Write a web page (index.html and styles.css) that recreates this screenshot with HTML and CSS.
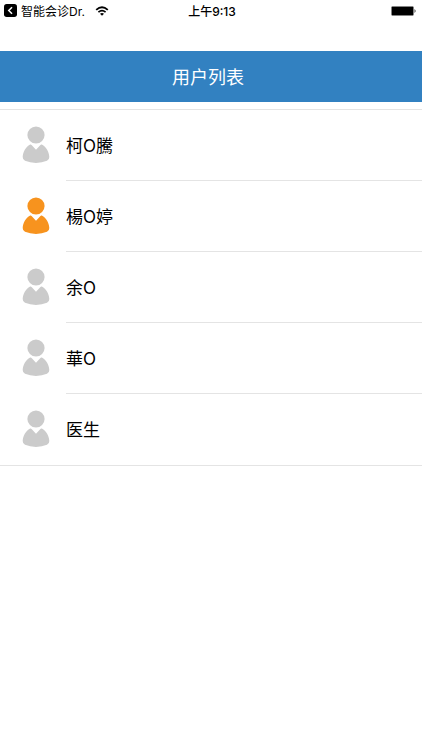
FILE: index.html
```
<!DOCTYPE html>
<html lang="zh-CN">
<head>
    <meta charset="UTF-8">
    <meta name="viewport" content="width=device-width, initial-scale=1.0">
    <title>用户列表</title>
    <link rel="stylesheet" href="styles.css">
</head>
<body>
    <svg class="symbols" aria-hidden="true">
        <symbol id="person" viewBox="0 0 28 38">
            <circle cx="14" cy="9" r="8.6"/>
            <path d="M8.2 18.6 Q9 18.3 9.8 19.2 L14 23.8 L18.2 19.2 Q19 18.3 19.8 18.6 C24.4 21 27 26 27.3 31 Q27.4 33.6 25 34.8 Q20 36.9 14 36.9 Q8 36.9 3 34.8 Q0.6 33.6 0.7 31 C1 26 3.6 21 8.2 18.6 Z"/>
        </symbol>
    </svg>

    <div class="status-bar">
        <a class="back-app" href="#">
            <svg class="back-icon" viewBox="0 0 12 12" aria-hidden="true">
                <rect width="12" height="12" rx="2.5" fill="#000"/>
                <path d="M7.4 3 L4.4 6 L7.4 9" fill="none" stroke="#fff" stroke-width="1.4"/>
            </svg>
            <span>智能会诊Dr.</span>
            <svg class="wifi-icon" viewBox="0 0 14 10" aria-hidden="true">
                <path d="M1.2 3.8 Q7 -1.4 12.8 3.8" fill="none" stroke="#000" stroke-width="1.8"/>
                <path d="M3.4 6.1 Q7 3 10.6 6.1" fill="none" stroke="#000" stroke-width="1.7"/>
                <path d="M5 7.8 Q7 6.2 9 7.8 L7 9.8 Z" fill="#000"/>
            </svg>
        </a>
        <span class="time">上午9:13</span>
        <svg class="battery-icon" viewBox="0 0 25 10" aria-hidden="true">
            <rect x="0.5" y="0.5" width="22" height="9" rx="1" fill="#000" stroke="#888" stroke-width="0.6"/>
            <path d="M23.6 3 Q25.4 5 23.6 7 Z" fill="#000"/>
        </svg>
    </div>

    <header class="header">
        <h1>用户列表</h1>
    </header>

    <ul class="user-list">
        <li class="user">
            <svg class="avatar" aria-hidden="true"><use href="#person"/></svg>
            <a class="name" href="#">柯O騰</a>
        </li>
        <li class="user active">
            <svg class="avatar" aria-hidden="true"><use href="#person"/></svg>
            <a class="name" href="#">楊O婷</a>
        </li>
        <li class="user">
            <svg class="avatar" aria-hidden="true"><use href="#person"/></svg>
            <a class="name" href="#">余O</a>
        </li>
        <li class="user">
            <svg class="avatar" aria-hidden="true"><use href="#person"/></svg>
            <a class="name" href="#">華O</a>
        </li>
        <li class="user">
            <svg class="avatar" aria-hidden="true"><use href="#person"/></svg>
            <a class="name" href="#">医生</a>
        </li>
    </ul>
</body>
</html>
```
FILE: styles.css
```
* {
    box-sizing: border-box;
}

body {
    margin: 0;
    background: #fff;
    color: #000;
    font-family: Inter, "Noto Sans CJK SC", sans-serif;
}

a {
    color: inherit;
    text-decoration: none;
}

.symbols {
    display: none;
}

.status-bar {
    display: grid;
    grid-template-columns: 1fr auto 1fr;
    align-items: center;
    height: 21px;
    margin-bottom: 30px;
    padding: 0 6px 0 4px;
    font-size: 12px;
}

.back-app {
    display: flex;
    align-items: center;
    gap: 4px;
}

.back-icon {
    width: 13px;
    height: 13px;
}

.wifi-icon {
    width: 14px;
    height: 10px;
    margin-left: 6px;
}

.time {
    padding-left: 4px;
    font-weight: 500;
}

.battery-icon {
    width: 25px;
    height: 10px;
    justify-self: end;
}

.header {
    padding: 13px 6px 11px 0;
    background: #3281c1;
    color: #fff;
    text-align: center;
}

.header h1 {
    margin: 0;
    font-size: 18px;
    font-weight: 400;
    line-height: 27px;
}

.user-list {
    margin: 7px 0 0;
    padding: 0;
    border-top: 1px solid #e4e4e4;
    border-bottom: 1px solid #e4e4e4;
    list-style: none;
}

.user {
    display: flex;
    align-items: center;
    padding-left: 22px;
}

.avatar {
    width: 28px;
    height: 38px;
    margin: 0 16px 2px 0;
    fill: #cbcbcb;
}

.active .avatar {
    fill: #f7931e;
}

.name {
    flex: 1;
    padding-top: 2px;
    border-bottom: 1px solid #e4e4e4;
    font-size: 17px;
    line-height: 68px;
}

.user:last-child .name {
    border-bottom-color: transparent;
}
```
